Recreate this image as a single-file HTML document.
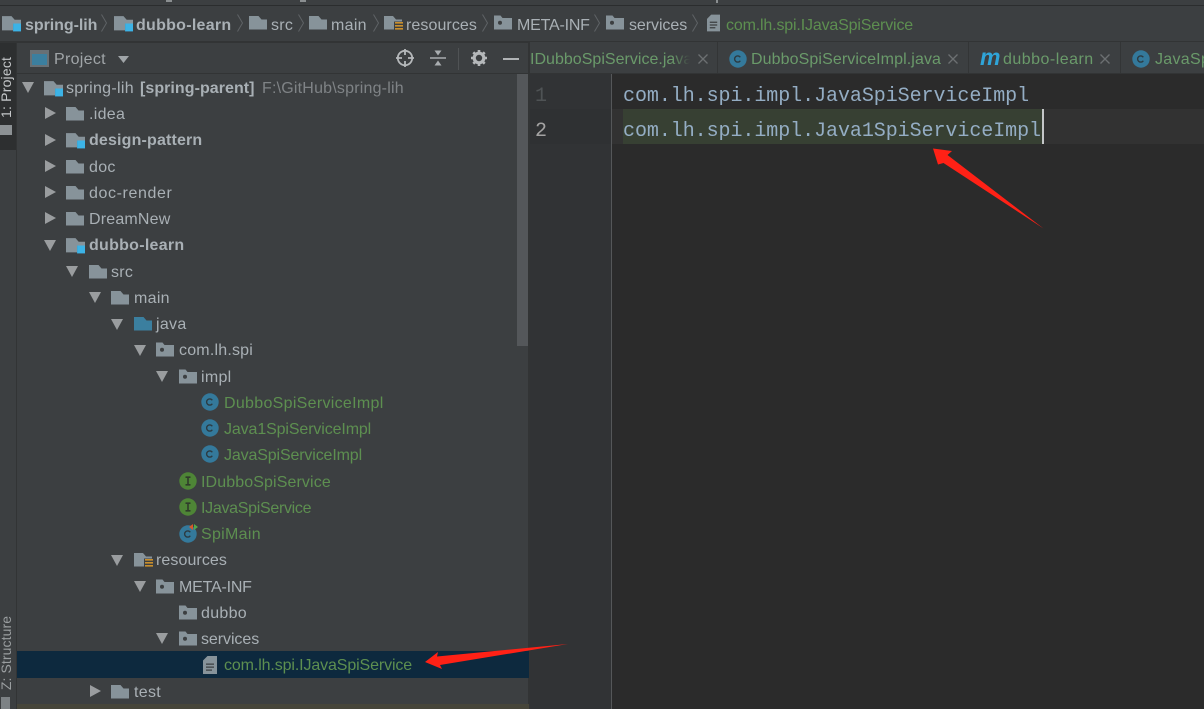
<!DOCTYPE html>
<html><head><meta charset="utf-8"><style>
html,body{margin:0;padding:0;background:#3c3f41}
#r{position:relative;width:1204px;height:709px;overflow:hidden;background:#3c3f41;font-family:"Liberation Sans","Noto Sans CJK SC",sans-serif;font-size:16px;letter-spacing:.3px;color:#a9b0b5}
#r div,#r span.a,#r svg.a{position:absolute}
.t{white-space:nowrap;line-height:20px;height:20px}
.g{color:#5d8f50}.b{font-weight:bold;letter-spacing:.27px}
.tg{color:#6a9a6a}
.code{font-family:"Liberation Mono",monospace;font-size:20px;letter-spacing:-.06px;color:#94adc4;white-space:pre;line-height:24px;height:24px}
svg{display:block;overflow:visible}
</style></head><body><div id="r">
<svg width="0" height="0" style="position:absolute"><defs>
<symbol id="f" viewBox="0 0 18 16" overflow="visible"><path d="M0 1h9.500l3 3.500h5.500V14.500H0z" fill="#87939a"/></symbol>
<symbol id="p" viewBox="0 0 18 16" overflow="visible"><path d="M0 .5h6.500l2 2.500H18V14.500H0z" fill="#87939a"/><circle cx="6" cy="7.800" r="2" fill="#3c3f41"/></symbol>
<symbol id="j" viewBox="0 0 18 16" overflow="visible"><path d="M0 1h9.500l3 3.500h5.500V14.500H0z" fill="#3b7f9f"/></symbol>
<symbol id="m" viewBox="0 0 18 16" overflow="visible"><path d="M0 1h9l3 3.500h6v3.500h-7.500v6.500H0z" fill="#87939a"/><path d="M10.500 8h7.500v7.500h-7.500z" fill="#3cb3e6"/></symbol>
<symbol id="rs" viewBox="0 0 20 17" overflow="visible"><path d="M0 1h9l3 3.500h6v2h-8v8H0z" fill="#87939a"/><path d="M11 7h8v1.600h-8zM11 10h8v1.600h-8zM11 13h8v1.600h-8z" fill="#c98f2d"/></symbol>
<symbol id="doc" viewBox="0 0 14 18" overflow="visible"><path d="M4.500 0H14v18H0V4.500z" fill="#87939a"/><path d="M3 7.500h8v1.300H3zM3 10.500h8v1.300H3zM3 13.500h6v1.300H3z" fill="#3c3f41"/></symbol>
<symbol id="rt" viewBox="0 0 11 12"><path d="M0 0l11 6-11 6z" fill="#9a9d9f"/></symbol>
<symbol id="dn" viewBox="0 0 12 11"><path d="M0 0h12L6 11z" fill="#9a9d9f"/></symbol>
<symbol id="cv" viewBox="0 0 6 18"><path d="M.5 .5L5.500 9 .5 17.500" fill="none" stroke="#5f6366" stroke-width="1"/></symbol>
<symbol id="c" viewBox="0 0 18 18"><circle cx="9" cy="9" r="8.700" fill="#34799b"/><path d="M11.300 7.300A3.100 3.100 0 1 0 11.300 10.700" fill="none" stroke="#2c3b42" stroke-width="1.400"/></symbol>
<symbol id="i" viewBox="0 0 18 18"><circle cx="9" cy="9" r="8.700" fill="#4e8536"/><path d="M6.500 5.200h5M6.500 12.800h5M9 5.200v7.600" fill="none" stroke="#2f3b2b" stroke-width="1.600"/></symbol>
<symbol id="x" viewBox="0 0 10 10"><path d="M.5 .5l9 9M9.500 .5l-9 9" stroke="#6c7072" stroke-width="1.300"/></symbol>
</defs></svg>

<!-- top strip -->
<div style="left:0;top:5px;width:1204px;height:1px;background:#2b2d2e"></div>
<div style="left:166px;top:0;width:6px;height:2px;background:#8b8f91"></div>
<div style="left:300px;top:0;width:6px;height:2px;background:#8b8f91"></div>
<div style="left:716px;top:0;width:2px;height:3px;background:#8b8f91"></div>
<div style="left:0;top:41px;width:530px;height:2px;background:#323435"></div>
<div style="left:530px;top:41px;width:674px;height:1px;background:#323435"></div>

<!-- breadcrumb -->
<svg class="a" style="left:2px;top:15px" width="19" height="17"><use href="#m" width="19" height="17"/></svg>
<div class="t b" style="left:25px;letter-spacing:-.05px;color:#a9b0b5;top:16px">spring-lih</div>
<svg class="a" style="left:101px;top:14px" width="6" height="18"><use href="#cv"/></svg>
<svg class="a" style="left:114px;top:15px" width="19" height="17"><use href="#m" width="19" height="17"/></svg>
<div class="t b" style="left:136px;top:16px">dubbo-learn</div>
<svg class="a" style="left:237px;top:14px" width="6" height="18"><use href="#cv"/></svg>
<svg class="a" style="left:249px;top:15px" width="18" height="16"><use href="#f"/></svg>
<div class="t" style="left:271px;top:16px">src</div>
<svg class="a" style="left:298px;top:14px" width="6" height="18"><use href="#cv"/></svg>
<svg class="a" style="left:309px;top:15px" width="18" height="16"><use href="#f"/></svg>
<div class="t" style="left:331px;top:16px">main</div>
<svg class="a" style="left:373px;top:14px" width="6" height="18"><use href="#cv"/></svg>
<svg class="a" style="left:384px;top:15px" width="20" height="17"><use href="#rs"/></svg>
<div class="t" style="left:406px;top:16px;letter-spacing:.08px">resources</div>
<svg class="a" style="left:482px;top:14px" width="6" height="18"><use href="#cv"/></svg>
<svg class="a" style="left:494px;top:15px" width="18" height="16"><use href="#p"/></svg>
<div class="t" style="left:517px;top:16px;letter-spacing:-.2px">META-INF</div>
<svg class="a" style="left:594px;top:14px" width="6" height="18"><use href="#cv"/></svg>
<svg class="a" style="left:606px;top:15px" width="18" height="16"><use href="#p"/></svg>
<div class="t" style="left:629px;top:16px;letter-spacing:-.07px">services</div>
<svg class="a" style="left:692px;top:14px" width="6" height="18"><use href="#cv"/></svg>
<svg class="a" style="left:707px;top:14px" width="13" height="18"><use href="#doc" width="13" height="18"/></svg>
<div class="t g" style="left:726px;top:16px;letter-spacing:-.16px">com.lh.spi.IJavaSpiService</div>

<!-- left tool strip -->
<div style="left:16px;top:42px;width:1px;height:667px;background:#323435"></div>
<div style="left:0;top:43px;width:16px;height:107px;background:#2d2f30"></div>
<div class="t" style="left:-24px;top:78px;width:60px;height:20px;font-size:14px;letter-spacing:.2px;color:#c4c7c9;transform:rotate(-90deg);text-align:center">1: Project</div>
<div style="left:0;top:125px;width:12px;height:10px;background:#8c9194"></div>
<div class="t" style="left:-32px;top:643px;width:76px;font-size:14px;letter-spacing:.1px;color:#9a9ea0;transform:rotate(-90deg);text-align:center">Z: Structure</div>
<div style="left:1px;top:697px;width:9px;height:12px;background:#7d8285"></div>

<!-- project header -->
<div style="left:17px;top:73px;width:513px;height:1px;background:#323435"></div>
<div style="left:30px;top:50px;width:19px;height:17px;background:#687075"></div>
<div style="left:32px;top:54px;width:15px;height:11px;background:#3b7f9f"></div>
<div class="t" style="left:54px;top:50px;color:#a0a5a8">Project</div>
<svg class="a" style="left:118px;top:56px" width="11" height="7"><path d="M0 0h11L5.500 7z" fill="#a0a5a8"/></svg>
<svg class="a" style="left:396px;top:49px" width="18" height="18" viewBox="0 0 18 18"><circle cx="9" cy="9" r="7.200" fill="none" stroke="#b5b8ba" stroke-width="1.800"/><path d="M9 0v6M9 12v6M0 9h6M12 9h6" stroke="#b5b8ba" stroke-width="1.800"/></svg>
<svg class="a" style="left:430px;top:50px" width="16" height="16" viewBox="0 0 16 16"><path d="M0 8h16" stroke="#a9adb0" stroke-width="1.500"/><path d="M4.500 0.500h7L8 5.500zM4.500 15.500h7L8 10.500z" fill="#a9adb0"/></svg>
<div style="left:458px;top:48px;width:1px;height:22px;background:#505355"></div>
<svg class="a" style="left:471px;top:50px" width="16" height="16" viewBox="0 0 16 16"><circle cx="8" cy="8" r="4.800" fill="none" stroke="#b5b8ba" stroke-width="3.200"/><path d="M8 0v3M8 13v3M0 8h3M13 8h3M2.300 2.300l2.100 2.100M11.600 11.600l2.100 2.100M13.700 2.300l-2.100 2.100M4.400 11.600l-2.100 2.100" stroke="#b5b8ba" stroke-width="2.600"/></svg>
<div style="left:503px;top:58px;width:16px;height:2px;background:#b0b3b5"></div>

<!-- scrollbar -->
<div style="left:517px;top:74px;width:11px;height:272px;background:#54575a"></div>
<div style="left:528px;top:42px;width:2px;height:667px;background:#323435"></div>

<!-- selected row -->
<div style="left:17px;top:651px;width:512px;height:27px;background:#0d293e"></div>
<div style="left:17px;top:704px;width:512px;height:5px;background:#46453a"></div>

<!-- tree -->
<svg class="a" style="left:22px;top:82px" width="12" height="11"><use href="#dn"/></svg>
<svg class="a" style="left:44px;top:80px" width="19" height="17"><use href="#m" width="19" height="17"/></svg>
<div class="t" style="left:66px;top:79px">spring-lih</div>
<div class="t b" style="left:140px;top:79px;letter-spacing:.05px">[spring-parent]</div>
<div class="t" style="left:262px;top:79px;color:#7f8386;letter-spacing:.2px">F:\GitHub\spring-lih</div>

<svg class="a" style="left:45px;top:107px" width="11" height="12"><use href="#rt"/></svg>
<svg class="a" style="left:66px;top:106px" width="18" height="16"><use href="#f"/></svg>
<div class="t" style="left:89px;top:105px">.idea</div>

<svg class="a" style="left:45px;top:134px" width="11" height="12"><use href="#rt"/></svg>
<svg class="a" style="left:66px;top:132px" width="19" height="17"><use href="#m" width="19" height="17"/></svg>
<div class="t b" style="left:89px;top:131px;letter-spacing:.16px">design-pattern</div>

<svg class="a" style="left:45px;top:160px" width="11" height="12"><use href="#rt"/></svg>
<svg class="a" style="left:66px;top:159px" width="18" height="16"><use href="#f"/></svg>
<div class="t" style="left:89px;top:158px">doc</div>

<svg class="a" style="left:45px;top:186px" width="11" height="12"><use href="#rt"/></svg>
<svg class="a" style="left:66px;top:185px" width="18" height="16"><use href="#f"/></svg>
<div class="t" style="left:89px;top:184px;letter-spacing:.6px">doc-render</div>

<svg class="a" style="left:45px;top:212px" width="11" height="12"><use href="#rt"/></svg>
<svg class="a" style="left:66px;top:211px" width="18" height="16"><use href="#f"/></svg>
<div class="t" style="left:89px;top:210px;letter-spacing:.18px">DreamNew</div>

<svg class="a" style="left:44px;top:240px" width="12" height="11"><use href="#dn"/></svg>
<svg class="a" style="left:66px;top:237px" width="19" height="17"><use href="#m" width="19" height="17"/></svg>
<div class="t b" style="left:89px;top:236px">dubbo-learn</div>

<svg class="a" style="left:66px;top:266px" width="12" height="11"><use href="#dn"/></svg>
<svg class="a" style="left:89px;top:264px" width="18" height="16"><use href="#f"/></svg>
<div class="t" style="left:111px;top:263px">src</div>

<svg class="a" style="left:89px;top:292px" width="12" height="11"><use href="#dn"/></svg>
<svg class="a" style="left:111px;top:290px" width="18" height="16"><use href="#f"/></svg>
<div class="t" style="left:134px;top:289px">main</div>

<svg class="a" style="left:111px;top:319px" width="12" height="11"><use href="#dn"/></svg>
<svg class="a" style="left:134px;top:316px" width="18" height="16"><use href="#j"/></svg>
<div class="t" style="left:156px;top:315px">java</div>

<svg class="a" style="left:134px;top:345px" width="12" height="11"><use href="#dn"/></svg>
<svg class="a" style="left:156px;top:342px" width="18" height="16"><use href="#p"/></svg>
<div class="t" style="left:179px;top:341px;letter-spacing:.2px">com.lh.spi</div>

<svg class="a" style="left:156px;top:371px" width="12" height="11"><use href="#dn"/></svg>
<svg class="a" style="left:179px;top:369px" width="18" height="16"><use href="#p"/></svg>
<div class="t" style="left:201px;top:368px">impl</div>

<svg class="a" style="left:201px;top:393px" width="18" height="18"><use href="#c"/></svg>
<div class="t g" style="left:224px;top:394px">DubboSpiServiceImpl</div>
<svg class="a" style="left:201px;top:419px" width="18" height="18"><use href="#c"/></svg>
<div class="t g" style="left:224px;top:420px;letter-spacing:-.12px">Java1SpiServiceImpl</div>
<svg class="a" style="left:201px;top:445px" width="18" height="18"><use href="#c"/></svg>
<div class="t g" style="left:224px;top:446px;letter-spacing:-.14px">JavaSpiServiceImpl</div>
<svg class="a" style="left:179px;top:472px" width="18" height="18"><use href="#i"/></svg>
<div class="t g" style="left:201px;top:473px;letter-spacing:.11px">IDubboSpiService</div>
<svg class="a" style="left:179px;top:498px" width="18" height="18"><use href="#i"/></svg>
<div class="t g" style="left:201px;top:499px;letter-spacing:-.3px">IJavaSpiService</div>
<svg class="a" style="left:179px;top:525px" width="18" height="18"><use href="#c"/></svg>
<svg class="a" style="left:189px;top:524px" width="9" height="7" viewBox="0 0 9 7"><path d="M4 0v6L0 3z" fill="#d9582a"/><path d="M5 0v6l4-3z" fill="#54a84a"/></svg>
<div class="t g" style="left:201px;top:525px">SpiMain</div>

<svg class="a" style="left:111px;top:555px" width="12" height="11"><use href="#dn"/></svg>
<svg class="a" style="left:134px;top:552px" width="20" height="17"><use href="#rs"/></svg>
<div class="t" style="left:156px;top:551px;letter-spacing:.08px">resources</div>

<svg class="a" style="left:134px;top:581px" width="12" height="11"><use href="#dn"/></svg>
<svg class="a" style="left:156px;top:579px" width="18" height="16"><use href="#p"/></svg>
<div class="t" style="left:179px;top:578px;letter-spacing:-.2px">META-INF</div>

<svg class="a" style="left:179px;top:605px" width="18" height="16"><use href="#p"/></svg>
<div class="t" style="left:201px;top:604px">dubbo</div>

<svg class="a" style="left:156px;top:633px" width="12" height="11"><use href="#dn"/></svg>
<svg class="a" style="left:179px;top:631px" width="18" height="16"><use href="#p"/></svg>
<div class="t" style="left:201px;top:630px;letter-spacing:-.07px">services</div>

<svg class="a" style="left:203px;top:656px" width="14" height="18"><use href="#doc"/></svg>
<div class="t g" style="left:224px;top:656px;letter-spacing:-.12px">com.lh.spi.IJavaSpiService</div>

<svg class="a" style="left:90px;top:685px" width="11" height="12"><use href="#rt"/></svg>
<svg class="a" style="left:111px;top:684px" width="18" height="16"><use href="#f"/></svg>
<div class="t" style="left:134px;top:683px">test</div>

<!-- tabs -->
<div style="left:530px;top:42px;width:674px;height:31px;background:#3c3f41"></div>
<div style="left:530px;top:73px;width:674px;height:1px;background:#323435"></div>
<div class="t tg" style="left:530px;top:50px;width:160px;overflow:hidden;letter-spacing:.02px">IDubboSpiService.java</div>
<div style="left:672px;top:48px;width:18px;height:22px;background:linear-gradient(90deg,rgba(60,63,65,0),#3c3f41)"></div>
<svg class="a" style="left:698px;top:54px" width="10" height="10"><use href="#x"/></svg>
<div style="left:717px;top:42px;width:1px;height:31px;background:#333536"></div>
<svg class="a" style="left:729px;top:50px" width="18" height="18"><use href="#c"/></svg>
<div class="t tg" style="left:751px;top:50px;letter-spacing:.1px">DubboSpiServiceImpl.java</div>
<svg class="a" style="left:948px;top:54px" width="10" height="10"><use href="#x"/></svg>
<div style="left:968px;top:42px;width:1px;height:31px;background:#333536"></div>
<div class="t" style="left:980px;top:47px;font-family:'Liberation Sans',sans-serif;font-size:23px;font-style:italic;font-weight:bold;color:#2fa4d8;letter-spacing:0">m</div>
<div class="t tg" style="left:1003px;top:50px;letter-spacing:.48px">dubbo-learn</div>
<svg class="a" style="left:1100px;top:54px" width="10" height="10"><use href="#x"/></svg>
<div style="left:1120px;top:42px;width:1px;height:31px;background:#333536"></div>
<svg class="a" style="left:1132px;top:50px" width="18" height="18"><use href="#c"/></svg>
<div class="t tg" style="left:1155px;top:50px">JavaSpiServiceImpl.java</div>

<!-- editor -->
<div style="left:530px;top:74px;width:81px;height:635px;background:#313335"></div>
<div style="left:611px;top:74px;width:1px;height:635px;background:#555759"></div>
<div style="left:612px;top:74px;width:592px;height:635px;background:#2b2b2b"></div>
<div style="left:530px;top:109px;width:81px;height:35px;background:#2f3133"></div>
<div style="left:612px;top:109px;width:592px;height:35px;background:#323232"></div>
<div style="left:623px;top:109px;width:419px;height:35px;background:#374033"></div>
<div style="left:1042px;top:109px;width:2px;height:35px;background:#c4c6c8"></div>
<div class="code" style="left:535px;top:85px;color:#4f5355">1</div>
<div class="code" style="left:535px;top:120px;color:#a4a3a3">2</div>
<div class="code" style="left:623px;top:85px">com.lh.spi.impl.JavaSpiServiceImpl</div>
<div class="code" style="left:623px;top:120px">com.lh.spi.impl.Java1SpiServiceImpl</div>

<!-- red arrows -->
<svg class="a" style="left:0;top:0" width="1204" height="709"><path d="M933 148.500L952 151 947.500 155 1043.500 228.500 943.500 163 938 164.500z" fill="#ff2116"/><path d="M425 662L438 652 437 656.500 568 644 440 665 442 669z" fill="#ff2116"/></svg>
</div></body></html>
